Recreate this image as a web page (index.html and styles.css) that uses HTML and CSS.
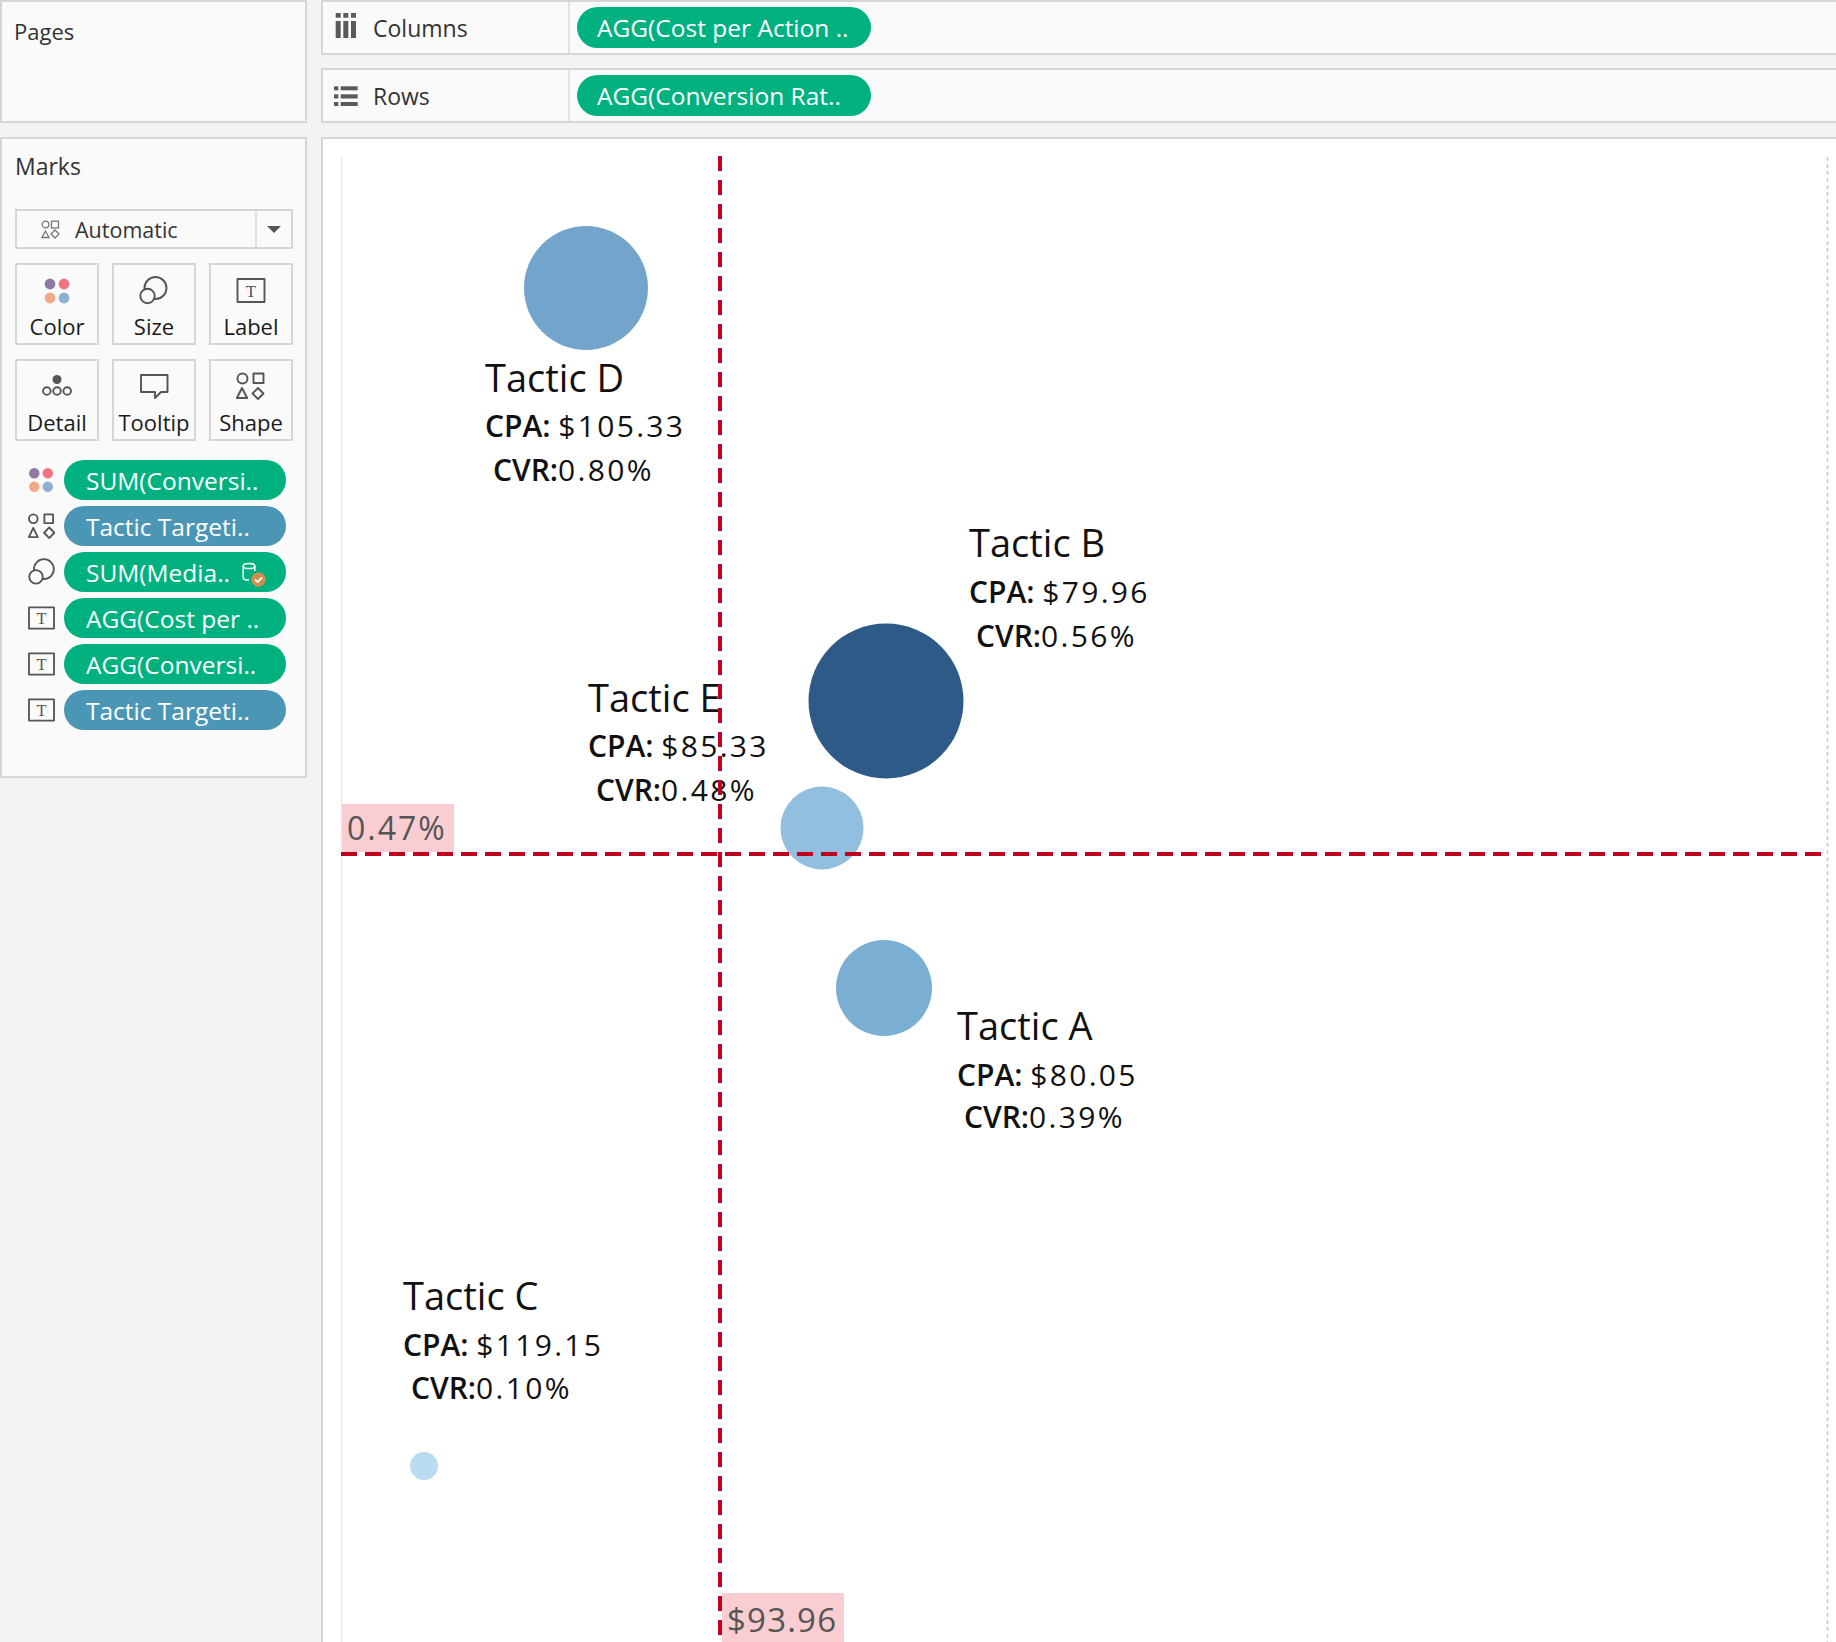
FILE: index.html
```html
<!DOCTYPE html>
<html>
<head>
<meta charset="utf-8">
<title>Tactic Scatter</title>
<link rel="stylesheet" href="styles.css">
</head>
<body>
<div class="app">
  <div class="left">
    <div class="panel pages">Pages</div>
    <div class="panel marks">
      <div class="marks-title">Marks</div>
      <div class="dropdown">
        <span class="dd-main">
          <svg class="dd-icon" viewBox="0 0 19 19"><circle cx="4.5" cy="4.5" r="3.4"/><rect x="10.5" y="1.2" width="7" height="6.8"/><polygon points="4.5,11 1,17.5 8,17.5"/><polygon points="14,10 18,14 14,18 10,14"/></svg>
          <span>Automatic</span>
        </span>
        <span class="dd-arrow"><svg viewBox="0 0 14 7"><polygon points="0,0 14,0 7,7"/></svg></span>
      </div>
      <div class="mark-buttons">
        <div class="mbtn">
          <svg viewBox="0 0 30 30"><circle cx="8" cy="8" r="5.4" fill="#8c7aa0"/><circle cx="22" cy="8" r="5.4" fill="#f27483"/><circle cx="8" cy="22" r="5.4" fill="#f2a987"/><circle cx="22" cy="22" r="5.4" fill="#8eaed2"/></svg>
          <span>Color</span>
        </div>
        <div class="mbtn">
          <svg class="stroke-icon" viewBox="0 0 30 30"><circle cx="16.5" cy="12" r="11"/><circle cx="8.5" cy="20" r="7.2" fill="#fafafa"/></svg>
          <span>Size</span>
        </div>
        <div class="mbtn">
          <svg class="stroke-icon" viewBox="0 0 30 30"><rect x="1.5" y="3" width="27" height="23"/><text x="15" y="21" class="t-glyph">T</text></svg>
          <span>Label</span>
        </div>
        <div class="mbtn">
          <svg class="stroke-icon" viewBox="0 0 30 30"><circle cx="15" cy="7.5" r="4.5" fill="#555" stroke="none"/><circle cx="4.8" cy="19" r="3.8"/><circle cx="15" cy="19" r="3.8"/><circle cx="25.2" cy="19" r="3.8"/></svg>
          <span>Detail</span>
        </div>
        <div class="mbtn">
          <svg class="stroke-icon" viewBox="0 0 30 30"><path d="M2 3 H28.5 V20 H22 L16 26 V20 H2 Z"/></svg>
          <span>Tooltip</span>
        </div>
        <div class="mbtn">
          <svg class="stroke-icon" viewBox="0 0 30 30"><circle cx="6.5" cy="6.5" r="5"/><rect x="17.5" y="1.5" width="10" height="9.5"/><polygon points="6,16 0.9,26 11.2,26"/><polygon points="22,16 27.5,21.5 22,27 16.5,21.5"/></svg>
          <span>Shape</span>
        </div>
      </div>
      <div class="pill-list">
        <div class="pill-row">
          <svg class="pill-icon" viewBox="0 0 28 28"><circle cx="6.5" cy="7" r="5.4" fill="#8c7aa0"/><circle cx="20.5" cy="7" r="5.4" fill="#f27483"/><circle cx="6.5" cy="21" r="5.4" fill="#f2a987"/><circle cx="20.5" cy="21" r="5.4" fill="#8eaed2"/></svg>
          <div class="pill green">SUM(Conversi..</div>
        </div>
        <div class="pill-row">
          <svg class="pill-icon stroke-icon" viewBox="0 0 28 28"><circle cx="5.5" cy="6.5" r="4.5"/><rect x="17" y="2" width="9" height="9"/><polygon points="5.5,16 0.9,25.5 10.1,25.5"/><polygon points="22,15.5 27.3,21 22,26.5 16.7,21"/></svg>
          <div class="pill blue">Tactic Targeti..</div>
        </div>
        <div class="pill-row">
          <svg class="pill-icon stroke-icon" viewBox="0 0 28 28"><circle cx="16.5" cy="11" r="10.3"/><circle cx="8.3" cy="19" r="7" fill="#fafafa"/></svg>
          <div class="pill green">SUM(Media..
            <svg class="db-icon" viewBox="0 0 26 26"><g fill="none" stroke="#fff" stroke-width="1.5"><ellipse cx="7" cy="4" rx="5.8" ry="2.6"/><path d="M1.2 4 V15.5 A5.8 2.6 0 0 0 7 18.1"/><path d="M12.8 4 V9"/></g><circle cx="16.5" cy="17.5" r="7.2" fill="#d18f4f"/><path d="M13 17.5 L15.6 20 L20.2 15.3" fill="none" stroke="#fff" stroke-width="1.8"/></svg>
          </div>
        </div>
        <div class="pill-row">
          <svg class="pill-icon stroke-icon" viewBox="0 0 28 28"><rect x="1" y="3" width="26" height="22"/><text x="14" y="20" class="t-glyph">T</text></svg>
          <div class="pill green">AGG(Cost per ..</div>
        </div>
        <div class="pill-row">
          <svg class="pill-icon stroke-icon" viewBox="0 0 28 28"><rect x="1" y="3" width="26" height="22"/><text x="14" y="20" class="t-glyph">T</text></svg>
          <div class="pill green">AGG(Conversi..</div>
        </div>
        <div class="pill-row">
          <svg class="pill-icon stroke-icon" viewBox="0 0 28 28"><rect x="1" y="3" width="26" height="22"/><text x="14" y="20" class="t-glyph">T</text></svg>
          <div class="pill blue">Tactic Targeti..</div>
        </div>
      </div>
    </div>
  </div>

  <div class="right">
    <div class="shelf">
      <div class="shelf-label">
        <svg class="shelf-icon cols-icon" viewBox="0 0 24 26"><rect x="1.7" y="0" width="5" height="4.7"/><rect x="1.7" y="8" width="5" height="17"/><rect x="9.3" y="0" width="5" height="4.7"/><rect x="9.3" y="8" width="5" height="17"/><rect x="17" y="0" width="5" height="4.7"/><rect x="17" y="8" width="5" height="17"/></svg>
        <span>Columns</span>
      </div>
      <div class="shelf-body"><div class="pill green wide">AGG(Cost per Action ..</div></div>
    </div>
    <div class="shelf rows">
      <div class="shelf-label">
        <svg class="shelf-icon" viewBox="0 0 24 20"><rect x="0" y="0.3" width="4.3" height="4"/><rect x="6.7" y="0.3" width="17" height="4"/><rect x="0" y="8.3" width="4.3" height="4.2"/><rect x="6.7" y="8.3" width="17" height="4.2"/><rect x="0" y="16" width="4.3" height="4"/><rect x="6.7" y="16" width="17" height="4"/></svg>
        <span>Rows</span>
      </div>
      <div class="shelf-body"><div class="pill green wide">AGG(Conversion Rat..</div></div>
    </div>
    <div class="view">
      <svg class="chart" viewBox="323 139 1520 1510" width="1520" height="1510">
        <line x1="341.5" y1="156" x2="341.5" y2="1660" class="pane-edge"/>
        <line x1="1827.5" y1="157" x2="1827.5" y2="1660" class="pane-edge-dash"/>

        <circle cx="586" cy="288" r="62" fill="#73a5cc"/>
        <circle cx="886" cy="701" r="77.5" fill="#2d5a86"/>
        <circle cx="822" cy="828" r="41.5" fill="#92bee0"/>
        <circle cx="884" cy="988" r="48" fill="#7aaed2"/>
        <circle cx="424" cy="1466" r="14" fill="#b9dcf0"/>

        <text x="485" y="392" class="t-title">Tactic D</text>
        <text x="485" y="437" class="t-line"><tspan class="b">CPA:</tspan> <tspan class="v">$105.33</tspan></text>
        <text x="493" y="481" class="t-line"><tspan class="b">CVR:</tspan><tspan class="v">0.80%</tspan></text>

        <text x="969" y="557" class="t-title">Tactic B</text>
        <text x="969" y="603" class="t-line"><tspan class="b">CPA:</tspan> <tspan class="v">$79.96</tspan></text>
        <text x="976" y="647" class="t-line"><tspan class="b">CVR:</tspan><tspan class="v">0.56%</tspan></text>

        <text x="588" y="712" class="t-title">Tactic E</text>
        <text x="588" y="757" class="t-line"><tspan class="b">CPA:</tspan> <tspan class="v">$85.33</tspan></text>
        <text x="596" y="801" class="t-line"><tspan class="b">CVR:</tspan><tspan class="v">0.48%</tspan></text>

        <text x="957" y="1040" class="t-title">Tactic A</text>
        <text x="957" y="1086" class="t-line"><tspan class="b">CPA:</tspan> <tspan class="v">$80.05</tspan></text>
        <text x="964" y="1128" class="t-line"><tspan class="b">CVR:</tspan><tspan class="v">0.39%</tspan></text>

        <text x="403" y="1310" class="t-title">Tactic C</text>
        <text x="403" y="1356" class="t-line"><tspan class="b">CPA:</tspan> <tspan class="v">$119.15</tspan></text>
        <text x="411" y="1399" class="t-line"><tspan class="b">CVR:</tspan><tspan class="v">0.10%</tspan></text>

        <rect x="342" y="804" width="112" height="48" class="ref-box"/>
        <text x="347" y="840" class="ref-text">0.47%</text>
        <rect x="722" y="1593" width="122" height="60" class="ref-box"/>
        <text x="727" y="1632" class="ref-text ref-text-x">$93.96</text>

        <line x1="720" y1="156" x2="720" y2="1660" class="ref-line-v"/>
        <line x1="341" y1="854" x2="1822" y2="854" class="ref-line-h"/>
      </svg>
    </div>
  </div>
</div>
</body>
</html>
```

FILE: styles.css
```css
html, body {
  margin: 0;
  padding: 0;
  height: 100%;
  overflow: hidden;
  background: #f3f3f3;
  font-family: "Open Sans", "Noto Sans", sans-serif;
  color: #333;
}

.app {
  display: flex;
  gap: 14px;
  height: 1660px;
}

/* ---------- left column ---------- */
.left {
  width: 307px;
  flex: none;
  display: flex;
  flex-direction: column;
  gap: 14px;
}

.panel {
  background: #fafafa;
  border: 2px solid #d6d6d6;
  box-sizing: border-box;
}

.pages {
  height: 123px;
  padding: 14px 12px;
  font-size: 22px;
  line-height: 30px;
}

.marks {
  height: 641px;
  padding: 12px 12px 0 13px;
}

.marks-title {
  font-size: 23px;
  line-height: 30px;
}

.dropdown {
  margin-top: 28px;
  height: 40px;
  border: 2px solid #d6d6d6;
  box-sizing: border-box;
  display: flex;
  background: #fafafa;
}

.dd-main {
  flex: 1;
  display: flex;
  align-items: center;
  padding-left: 24px;
  gap: 15px;
  font-size: 21.5px;
  color: #333;
}

.dd-icon {
  width: 19px;
  height: 19px;
  fill: none;
  stroke: #777;
  stroke-width: 1.3;
}

.dd-arrow {
  width: 34px;
  border-left: 2px solid #e2e2e2;
  display: flex;
  align-items: center;
  justify-content: center;
}

.dd-arrow svg {
  width: 14px;
  height: 7px;
  fill: #555;
}

.mark-buttons {
  margin-top: 14px;
  display: grid;
  grid-template-columns: repeat(3, 84px);
  column-gap: 13px;
  row-gap: 14px;
}

.mbtn {
  height: 82px;
  box-sizing: border-box;
  border: 2px solid #d6d6d6;
  display: flex;
  flex-direction: column;
  align-items: center;
  padding-top: 11px;
}

.mbtn svg {
  width: 30px;
  height: 30px;
  display: block;
}

.mbtn span {
  margin-top: 6px;
  font-size: 22px;
  line-height: 28px;
  color: #1a1a1a;
}

.stroke-icon {
  fill: none;
  stroke: #555;
  stroke-width: 1.9;
  stroke-linejoin: round;
}

.t-glyph {
  font-family: "Liberation Serif", "DejaVu Serif", serif;
  font-size: 17px;
  fill: #555;
  stroke: none;
  text-anchor: middle;
}

.pill-list {
  margin-top: 19px;
  display: flex;
  flex-direction: column;
  gap: 6px;
}

.pill-row {
  display: flex;
  align-items: center;
  gap: 9px;
  height: 40px;
}

.pill-icon {
  width: 27px;
  height: 28px;
  margin-left: 13px;
  flex: none;
}

.pill {
  width: 222px;
  height: 40px;
  border-radius: 20px;
  box-sizing: border-box;
  padding-left: 22px;
  display: flex;
  align-items: center;
  color: #fff;
  font-size: 24.5px;
  white-space: nowrap;
  flex: none;
}

.green { background: #00b180; }
.blue { background: #4c96b5; }

.db-icon {
  width: 26px;
  height: 26px;
  margin-left: 12px;
  margin-top: 6px;
}

/* ---------- right column ---------- */
.right {
  flex: 1;
  display: flex;
  flex-direction: column;
  margin-right: -8px;
  min-width: 0;
}

.shelf {
  height: 55px;
  flex: none;
  box-sizing: border-box;
  border: 2px solid #d6d6d6;
  background: #fafafa;
  display: flex;
}

.shelf.rows {
  margin-top: 13px;
}

.shelf-label {
  width: 247px;
  box-sizing: border-box;
  border-right: 2px solid #e2e2e2;
  display: flex;
  align-items: center;
  padding-left: 11px;
  gap: 15px;
  font-size: 23px;
  color: #333;
}

.shelf-icon {
  width: 24px;
  height: 20px;
  fill: #5a5a5a;
  flex: none;
}

.cols-icon {
  height: 26px;
  margin-top: -3px;
}

.shelf-body {
  display: flex;
  align-items: center;
  padding-left: 7px;
}

.pill.wide {
  width: 294px;
  height: 41px;
  border-radius: 21px;
  padding-left: 20px;
}

.view {
  flex: 1;
  margin-top: 14px;
  border-left: 2px solid #d6d6d6;
  border-top: 2px solid #d6d6d6;
  background: #fff;
  position: relative;
  overflow: hidden;
}

.chart {
  position: absolute;
  left: 0;
  top: 0;
  display: block;
}

.pane-edge {
  stroke: #ececec;
  stroke-width: 1.5;
}

.pane-edge-dash {
  stroke: #c8c8c8;
  stroke-width: 1.5;
  stroke-dasharray: 4 3;
}

.t-title {
  font-family: "Open Sans", "Noto Sans", sans-serif;
  font-size: 38px;
  fill: #111;
}

.t-line {
  font-family: "Open Sans", "Noto Sans", sans-serif;
  font-size: 30px;
  fill: #111;
}

.t-line .b {
  font-weight: 600;
}

.t-line .v {
  letter-spacing: 2.3px;
}

.ref-box {
  fill: #f9cdd1;
}

.ref-text {
  font-family: "Open Sans", "Noto Sans", sans-serif;
  font-size: 32px;
  letter-spacing: 2px;
  fill: #555;
}

.ref-text-x {
  font-size: 33px;
  letter-spacing: 1.2px;
}

.ref-line-v {
  stroke: #c0001f;
  stroke-width: 4;
  stroke-dasharray: 15 9;
}

.ref-line-h {
  stroke: #c0001f;
  stroke-width: 4;
  stroke-dasharray: 16 8;
}
```
